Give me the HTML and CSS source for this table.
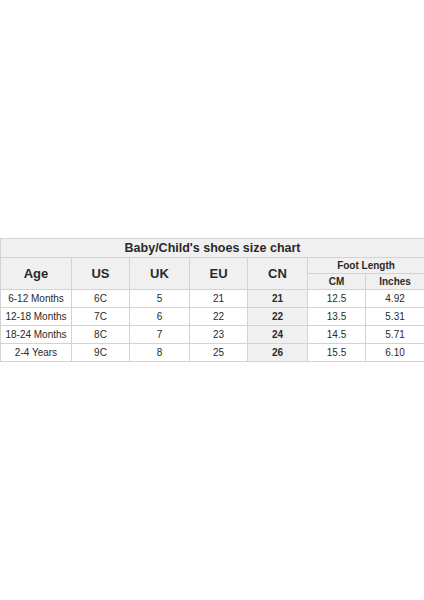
FILE: index.html
```html
<!DOCTYPE html>
<html>
<head>
<meta charset="utf-8">
<link rel="stylesheet" href="styles.css">
</head>
<body>
<div class="page">
  <table class="chart">
    <colgroup>
      <col class="c-age"><col class="c-us"><col class="c-uk"><col class="c-eu"><col class="c-cn"><col class="c-cm"><col class="c-in">
    </colgroup>
    <tr class="title-row"><td colspan="7" class="title">Baby/Child's shoes size chart</td></tr>
    <tr class="head-a">
      <td rowspan="2" class="head">Age</td>
      <td rowspan="2" class="head">US</td>
      <td rowspan="2" class="head">UK</td>
      <td rowspan="2" class="head">EU</td>
      <td rowspan="2" class="head">CN</td>
      <td colspan="2" class="sub">Foot Length</td>
    </tr>
    <tr class="head-b">
      <td class="sub">CM</td>
      <td class="sub">Inches</td>
    </tr>
    <tr class="row"><td>6-12 Months</td><td>6C</td><td>5</td><td>21</td><td class="cn">21</td><td>12.5</td><td>4.92</td></tr>
    <tr class="row"><td>12-18 Months</td><td>7C</td><td>6</td><td>22</td><td class="cn">22</td><td>13.5</td><td>5.31</td></tr>
    <tr class="row"><td>18-24 Months</td><td>8C</td><td>7</td><td>23</td><td class="cn">24</td><td>14.5</td><td>5.71</td></tr>
    <tr class="row"><td>2-4 Years</td><td>9C</td><td>8</td><td>25</td><td class="cn">26</td><td>15.5</td><td>6.10</td></tr>
  </table>
</div>
</body>
</html>
```
FILE: styles.css
```css
html, body {
  margin: 0;
  padding: 0;
  background: #fff;
}
.page {
  width: 424px;
  height: 600px;
  display: flex;
  flex-direction: column;
  justify-content: center;
}
.chart {
  width: 424px;
  border-collapse: collapse;
  table-layout: fixed;
  font-family: "Liberation Sans", Arial, sans-serif;
  color: #2a2a2a;
}
.c-age { width: 71px; }
.c-us { width: 58px; }
.c-uk { width: 60px; }
.c-eu { width: 58px; }
.c-cn { width: 60px; }
.c-cm { width: 58px; }
.c-in { width: 59px; }
.chart td {
  border: 1px solid #d3d3d3;
  text-align: center;
  padding: 0;
  font-size: 10px;
  line-height: 13px;
}
.title-row td { height: 18px; }
.chart td.title {
  background: #f0f0f0;
  font-weight: bold;
  font-size: 12.5px;
}
.head-a td, .head-b td { height: 15px; }
.chart td.head {
  background: #f0f0f0;
  font-weight: bold;
  font-size: 13px;
}
.chart td.sub {
  background: #f0f0f0;
  font-weight: bold;
  font-size: 10px;
}
.row td { height: 17px; }
.chart td.cn {
  background: #f0f0f0;
  font-weight: bold;
}
```
